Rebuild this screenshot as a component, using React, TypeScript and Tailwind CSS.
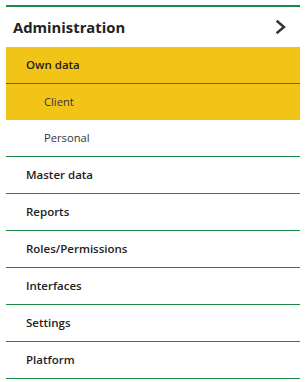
export default function App() {
  const items = [
    "Master data",
    "Reports",
    "Roles/Permissions",
    "Interfaces",
    "Settings",
    "Platform",
  ];

  return (
    <div
      className="min-h-screen bg-white px-[6px] pt-[5px] text-[#222]"
      style={{ fontFamily: '"Open Sans", "Liberation Sans", sans-serif' }}
    >
      <div className="border-t-2 border-[#1b8a43]">
        {/* Header */}
        <div className="flex h-[40px] items-center justify-between pl-[7px] pr-[13px]">
          <h1 className="text-[14.8px] font-bold">Administration</h1>
          <svg width="12" height="16" viewBox="0 0 12 16" fill="none">
            <path
              d="M2.5 2.5 L9 8 L2.5 13.5"
              stroke="#333"
              strokeWidth="2.4"
              strokeLinecap="square"
            />
          </svg>
        </div>

        {/* Own data group */}
        <div className="flex h-[37px] items-center border-b border-[#1b8a43] bg-[#f2c418] pl-[20px] text-[11.5px] font-semibold">
          Own data
        </div>
        <div className="flex h-[36px] items-center bg-[#f2c418] pl-[38px] text-[11.2px] text-[#333]">
          Client
        </div>
        <div className="flex h-[37px] items-center border-b border-[#1b8a43] pl-[38px] text-[11.2px] text-[#333]">
          Personal
        </div>

        {items.map((item) => (
          <div
            key={item}
            className="flex h-[37px] items-center border-b border-[#1b8a43] pl-[20px] text-[11.5px] font-semibold"
          >
            {item}
          </div>
        ))}
      </div>
    </div>
  );
}
